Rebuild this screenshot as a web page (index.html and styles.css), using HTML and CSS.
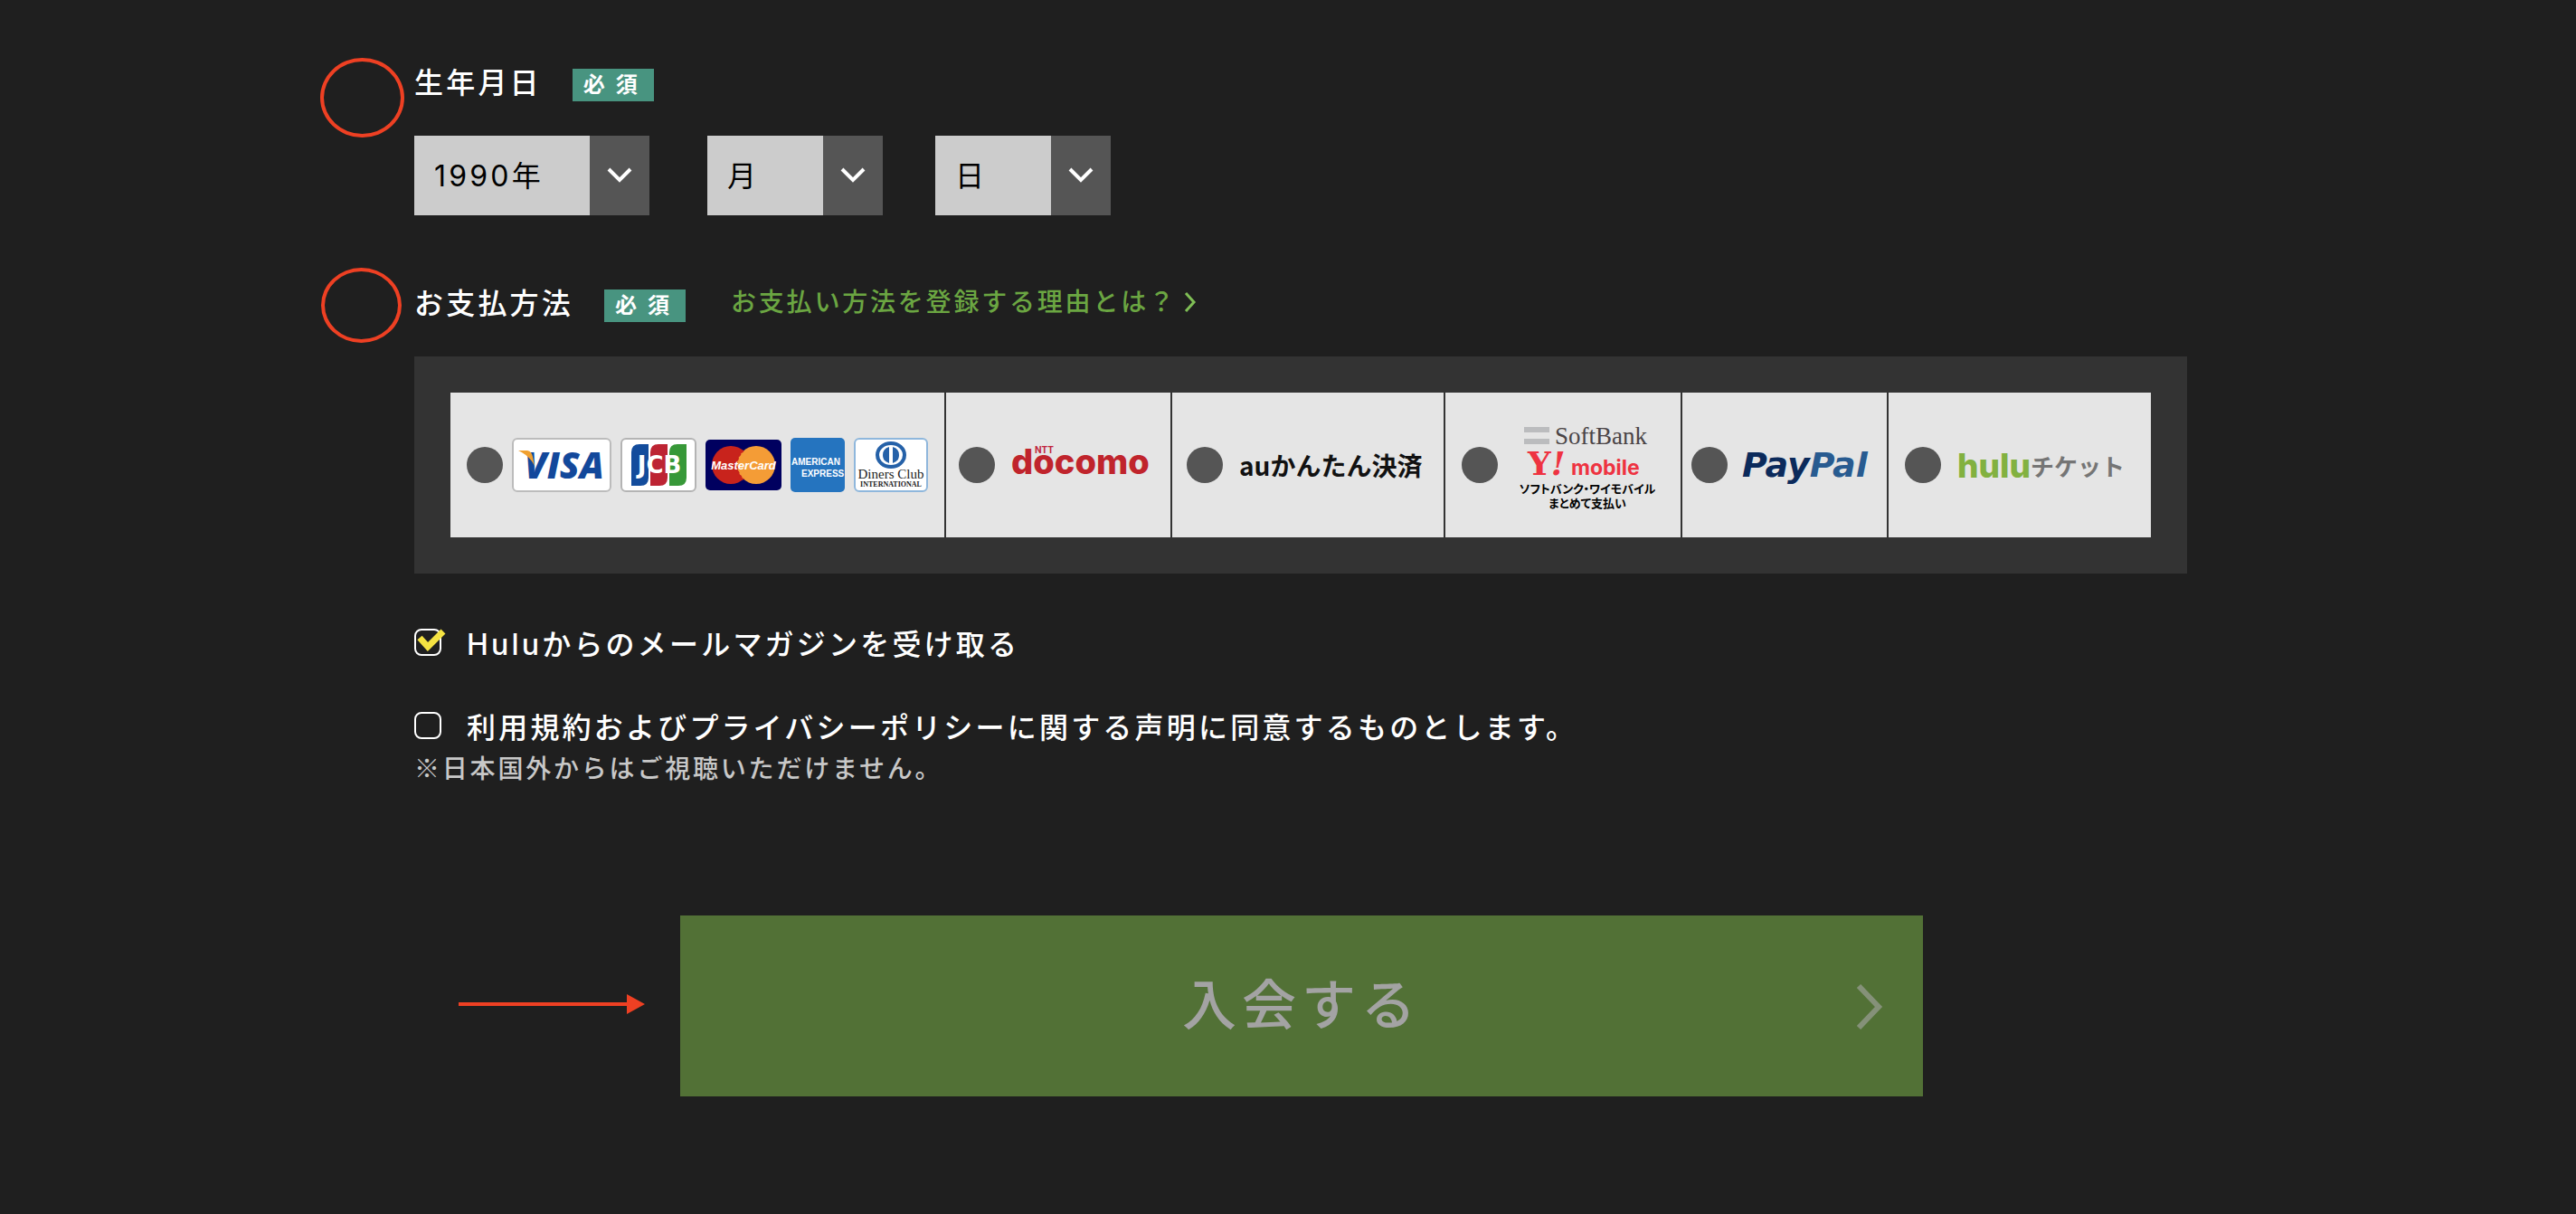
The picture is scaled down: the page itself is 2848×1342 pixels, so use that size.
FILE: index.html
```html
<!DOCTYPE html>
<html lang="ja">

<head>
    <meta charset="UTF-8">
    <title>Hulu 会員登録</title>
    <link rel="stylesheet" href="styles.css">
</head>

<body>
    <form class="signup">
        <section class="field">
            <div class="mark mark-birth"></div>
            <div class="heading">
                <h2 class="title">生年月日</h2>
                <span class="badge">必須</span>
            </div>
            <div class="birthday">
                <div class="select-box year">
                    <select aria-label="年">
                        <option>1990年</option>
                    </select>
                    <span class="toggle"><svg width="28" height="18" viewBox="0 0 28 18"><path d="M2 2L14 14L26 2"/></svg></span>
                </div>
                <div class="select-box">
                    <select aria-label="月">
                        <option>月</option>
                    </select>
                    <span class="toggle"><svg width="28" height="18" viewBox="0 0 28 18"><path d="M2 2L14 14L26 2"/></svg></span>
                </div>
                <div class="select-box">
                    <select aria-label="日">
                        <option>日</option>
                    </select>
                    <span class="toggle"><svg width="28" height="18" viewBox="0 0 28 18"><path d="M2 2L14 14L26 2"/></svg></span>
                </div>
            </div>
        </section>

        <section class="field payment">
            <div class="mark mark-payment"></div>
            <div class="heading">
                <h2 class="title">お支払方法</h2>
                <span class="badge">必須</span>
                <a class="reason" href="#">お支払い方法を登録する理由とは？<svg width="14" height="22" viewBox="0 0 14 22"><path d="M2 1L11 11L2 21"/></svg></a>
            </div>
            <div class="panel">
                <div class="methods">
                    <label class="method card">
                        <input type="radio" name="payment" aria-label="クレジットカード">
                        <span class="cards">
                            <svg width="110" height="60" viewBox="0 0 110 60">
                                <rect x="1" y="1" width="108" height="58" rx="5" fill="#fff" stroke="#bcbcbc" stroke-width="2"/>
                                <text x="14" y="45" class="visa">VISA</text>
                                <path d="M7 14H17Q22 15 23 21L25 31Q20 20 7 14Z" fill="#f0a030"/>
                            </svg>
                            <svg width="84" height="60" viewBox="0 0 84 60">
                                <rect x="1" y="1" width="82" height="58" rx="5" fill="#fff" stroke="#b4b4b4" stroke-width="2"/>
                                <path d="M12 16Q12 7 21 7H31V44Q31 53 22 53H12Z" fill="#134c9c"/>
                                <path d="M33 16Q33 7 42 7H52V44Q52 53 43 53H33Z" fill="#bd2433"/>
                                <path d="M54 16Q54 7 63 7H73V44Q73 53 64 53H54Z" fill="#379838"/>
                                <text x="43" y="39" class="jcb">JCB</text>
                            </svg>
                            <svg width="84" height="56" viewBox="0 0 84 56">
                                <rect width="84" height="56" rx="5" fill="#00005f"/>
                                <circle cx="28" cy="28" r="21" fill="#c8231c"/>
                                <circle cx="56" cy="28" r="21" fill="#f49c36"/>
                                <path d="M42 12A21 21 0 0 0 42 44" fill="none" stroke="#c8231c" stroke-width="2" stroke-dasharray="3 2"/>
                                <text x="42" y="33" class="master">MasterCard</text>
                            </svg>
                            <svg width="60" height="60" viewBox="0 0 60 60">
                                <rect width="60" height="60" rx="5" fill="#2574bf"/>
                                <text x="1" y="30" class="amex">AMERICAN</text>
                                <text x="12" y="43" class="amex">EXPRESS</text>
                            </svg>
                            <svg width="82" height="60" viewBox="0 0 82 60">
                                <rect x="1" y="1" width="80" height="58" rx="5" fill="#fff" stroke="#8fb7dc" stroke-width="2"/>
                                <ellipse cx="41" cy="19" rx="15" ry="13" fill="#fff" stroke="#2561a8" stroke-width="4"/>
                                <path d="M39 10V28Q32 26 32 19T39 10ZM43 10V28Q50 26 50 19T43 10Z" fill="#2561a8"/>
                                <text x="41" y="45" class="diners">Diners Club</text>
                                <text x="41" y="54" class="diners-sub">INTERNATIONAL</text>
                            </svg>
                        </span>
                    </label>
                    <label class="method docomo">
                        <input type="radio" name="payment">
                        <svg width="158" height="60" viewBox="0 0 158 60">
                            <text x="26" y="17" class="ntt">NTT</text>
                            <text x="0" y="40" class="docomo-name">docomo</text>
                        </svg>
                    </label>
                    <label class="method au">
                        <input type="radio" name="payment">
                        <span class="au-name">auかんたん決済</span>
                    </label>
                    <label class="method softbank">
                        <input type="radio" name="payment">
                        <svg width="150" height="108" viewBox="0 -4 150 108">
                            <path d="M5 8H33V14H5ZM5 21H33V27H5Z" fill="#bbbcbe"/>
                            <text x="39" y="27" class="sb-name">SoftBank</text>
                            <text x="9" y="61" class="ym-y">Y<tspan class="ym-mark">!</tspan></text>
                            <text x="57" y="61" class="ym-mobile">mobile</text>
                            <text x="75" y="81" class="sb-note">ソフトバンク・ワイモバイル</text>
                            <text x="75" y="97" class="sb-note">まとめて支払い</text>
                        </svg>
                    </label>
                    <label class="method paypal">
                        <input type="radio" name="payment">
                        <span class="paypal-name">Pay<span class="pal">Pal</span></span>
                    </label>
                    <label class="method ticket">
                        <input type="radio" name="payment">
                        <span class="ticket-name"><b>hulu</b>チケット</span>
                    </label>
                </div>
            </div>
        </section>

        <section class="agree">
            <label class="check">
                <span class="check-box">
                    <input type="checkbox" checked>
                    <svg class="tick" width="32" height="26" viewBox="0 0 32 26"><path d="M3 10L12 20L29 3"/></svg>
                </span>
                Huluからのメールマガジンを受け取る
            </label>
            <label class="check">
                <span class="check-box"><input type="checkbox"></span>
                利用規約およびプライバシーポリシーに関する声明に同意するものとします。
            </label>
            <p class="note">※日本国外からはご視聴いただけません。</p>
        </section>

        <div class="submit-row">
            <svg class="pointer" width="206" height="22" viewBox="0 0 206 22"><path d="M0 9H186V0L206 11L186 22V13H0Z"/></svg>
            <button class="submit" type="submit" disabled>
                入会する
                <svg class="submit-arrow" width="30" height="50" viewBox="0 0 30 50"><path d="M3 2L25 25L3 48"/></svg>
            </button>
        </div>
    </form>
</body>

</html>
```

FILE: styles.css
```css
* {
    box-sizing: border-box;
}

body {
    margin: 0;
    min-height: 100vh;
    padding: 70px 0 0 28px;
    background: #1f1f1f;
    color: #fff;
    font-family: Inter, "Noto Sans CJK JP", sans-serif;
    font-size: 32px;
    letter-spacing: 0.1em;
}

.signup {
    max-width: 1960px;
    margin: 0 auto;
}

.field {
    position: relative;
}

.payment {
    margin-top: 76px;
}

/* 見出し */
.heading {
    display: flex;
    align-items: center;
    height: 48px;
}

.title {
    margin: 0 34px 4px 0;
    font-size: 32px;
    font-weight: 500;
    line-height: 44px;
}

.badge {
    width: 90px;
    padding-left: 12px;
    background: #489480;
    font-size: 24px;
    font-weight: 700;
    line-height: 36px;
    letter-spacing: 12px;
    white-space: nowrap;
}

.reason {
    display: flex;
    align-items: center;
    gap: 8px;
    margin: 0 0 8px 50px;
    color: #6ba642;
    font-size: 28px;
    font-weight: 500;
    line-height: 40px;
    letter-spacing: 0.1em;
    text-decoration: none;
}

.reason svg {
    fill: none;
    stroke: #7fbe55;
    stroke-width: 3;
}

/* 赤い丸と矢印 */
.mark {
    position: absolute;
    border: 4px solid #ee4023;
    border-radius: 50%;
}

.mark-birth {
    top: -6px;
    left: -104px;
    width: 93px;
    height: 88px;
}

.mark-payment {
    top: -18px;
    left: -103px;
    width: 89px;
    height: 83px;
}

.pointer {
    position: absolute;
    top: 87px;
    left: 49px;
    fill: #ee4023;
}

/* 生年月日 */
.birthday {
    display: flex;
    gap: 58px;
    margin-top: 32px;
}

.select-box {
    display: flex;
    position: relative;
    width: 194px;
    height: 88px;
}

.select-box.year {
    width: 260px;
    margin-right: 6px;
}

.select-box select {
    appearance: none;
    width: 100%;
    padding: 0 66px 0 22px;
    border: 0;
    border-radius: 0;
    background: #ccc;
    color: #000;
    font: inherit;
    letter-spacing: inherit;
}

.toggle {
    display: flex;
    justify-content: center;
    align-items: center;
    position: absolute;
    top: 0;
    right: 0;
    width: 66px;
    height: 100%;
    background: #555;
    pointer-events: none;
}

.toggle svg {
    fill: none;
    stroke: #fff;
    stroke-width: 4;
}

/* お支払方法 */
.panel {
    margin-top: 32px;
    padding: 40px;
    background: #333;
}

.methods {
    display: grid;
    grid-template-columns: 546fr 248fr 300fr 260fr 226fr 290fr;
    gap: 2px;
    letter-spacing: 0;
}

.method {
    display: flex;
    align-items: center;
    height: 160px;
    padding-left: 18px;
    background: #e5e5e5;
    white-space: nowrap;
}

.method input {
    appearance: none;
    flex: none;
    width: 40px;
    height: 40px;
    margin: 0;
    border-radius: 50%;
    background: #555;
}

.cards {
    display: flex;
    align-items: center;
    gap: 10px;
    margin-left: 10px;
}

.visa {
    fill: #12489b;
    font: italic 800 40px "Open Sans", sans-serif;
}

.jcb {
    fill: #fff;
    font: 700 26px "DejaVu Sans", sans-serif;
    text-anchor: middle;
}

.master {
    fill: #fff;
    font: italic 700 13px "Liberation Sans", sans-serif;
    text-anchor: middle;
}

.amex {
    fill: #fff;
    font: 700 10px "Liberation Sans", sans-serif;
}

.diners {
    fill: #222;
    font: 15px "Liberation Serif", serif;
    text-anchor: middle;
}

.diners-sub {
    fill: #222;
    font: 700 8px "Liberation Serif", serif;
    text-anchor: middle;
}

.method.docomo {
    padding-left: 14px;
}

.docomo svg {
    margin-left: 18px;
}

.docomo-name {
    fill: #c0242c;
    font: 800 38px Inter, sans-serif;
}

.ntt {
    fill: #c0243c;
    font: 700 10px Inter, sans-serif;
}

.method.au {
    padding-left: 16px;
}

.au-name {
    margin-left: 18px;
    color: #111;
    font: 700 28px "Noto Sans CJK JP", sans-serif;
}

.softbank svg {
    margin-left: 24px;
}

.sb-name {
    fill: #4a4446;
    font: 27px "Liberation Serif", serif;
}

.ym-y {
    fill: #ee3341;
    font: 700 36px "DejaVu Serif", serif;
}

.ym-mark {
    font-style: italic;
}

.ym-mobile {
    fill: #ee3341;
    font: 700 23px Inter, sans-serif;
}

.sb-note {
    fill: #000;
    font: 700 13px "Noto Sans CJK JP", sans-serif;
    font-feature-settings: "palt";
    text-anchor: middle;
}

.method.paypal {
    padding-left: 10px;
}

.paypal-name {
    margin-left: 16px;
    color: #0b2a5b;
    font: italic 700 38px "DejaVu Sans", sans-serif;
}

.pal {
    color: #285b90;
}

.ticket-name {
    display: flex;
    align-items: center;
    margin-left: 18px;
    color: #757575;
    font: 700 26px "Noto Sans CJK JP", sans-serif;
}

.ticket-name b {
    color: #82b140;
    font: 800 37px Inter, sans-serif;
}

/* 同意 */
.agree {
    margin-top: 52px;
}

.check {
    display: flex;
    align-items: center;
    height: 48px;
    font-weight: 500;
}

.check + .check {
    margin-top: 44px;
}

.check-box {
    display: flex;
    position: relative;
    margin-right: 28px;
}

.check-box input {
    appearance: none;
    width: 30px;
    height: 30px;
    margin: 0;
    border: 2px solid #fff;
    border-radius: 8px;
}

.tick {
    position: absolute;
    top: 0;
    left: 3px;
    fill: none;
    stroke: #f5e342;
    stroke-width: 7;
}

.note {
    margin: 0;
    color: #c8c8c8;
    font-family: "Noto Sans CJK JP", sans-serif;
    font-size: 28px;
    font-weight: 500;
    line-height: 44px;
    letter-spacing: 0.1em;
}

/* 入会ボタン */
.submit-row {
    position: relative;
    margin-top: 142px;
    padding: 0 292px 0 294px;
}

.submit {
    display: block;
    position: relative;
    width: 100%;
    height: 200px;
    padding: 0 0 12px;
    border: 0;
    background: #527136;
    color: #a3a3a3;
    font: 500 60px "Noto Sans CJK JP", sans-serif;
    letter-spacing: 0.1em;
}

.submit-arrow {
    position: absolute;
    top: 76px;
    right: 44px;
    fill: none;
    stroke: #859179;
    stroke-width: 6;
}
```
